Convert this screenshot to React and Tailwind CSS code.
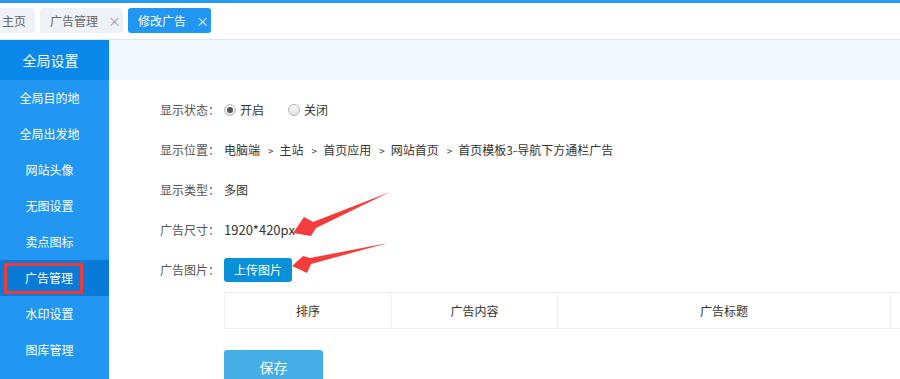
import React from "react";

const menu = ["全局目的地", "全局出发地", "网站头像", "无图设置", "卖点图标", "广告管理", "水印设置", "图库管理"];
const crumbs = ["主站", "首页应用", "网站首页", "首页模板3-导航下方通栏广告"];

function Row({ label, children }) {
  return (
    <div className="flex items-center h-[40px]">
      <div className="w-[64px] text-[#555]">{label}</div>
      <div className="flex items-center text-[#333]">{children}</div>
    </div>
  );
}

function Radio({ checked, label }) {
  return (
    <label className="flex items-center mr-[24px]">
      <span className="w-[12px] h-[12px] rounded-full border border-[#b5b5b5] bg-gradient-to-b from-[#fafafa] to-[#e2e2e2] flex items-center justify-center">
        {checked && <span className="w-[6px] h-[6px] rounded-full bg-[#555]" />}
      </span>
      <span className="ml-[4px]">{label}</span>
    </label>
  );
}

export default function App() {
  return (
    <div
      className="relative w-[900px] h-[379px] overflow-hidden bg-white text-[12px]"
      style={{ fontFamily: '"Noto Sans CJK SC", "Noto Sans", sans-serif' }}
    >
      <div className="h-[3px] bg-[#239bf3]" />
      {/* tabs */}
      <div className="h-[37px] border-b border-[#dfe6f0] flex items-start pt-[5px] -ml-[8px] gap-[5px]">
        <div className="h-[25px] flex items-center pl-[10px] pr-[9px] rounded-[3px] bg-[#eff1f8] text-[#666]">主页</div>
        <div className="h-[25px] w-[83px] flex items-center pl-[10px] rounded-[3px] bg-[#eff1f8] text-[#666]">
          广告管理<span className="ml-[10px] text-[#999] text-[13px]">×</span>
        </div>
        <div className="h-[25px] w-[83px] flex items-center pl-[10px] rounded-[3px] bg-[#2196f3] text-white">
          修改广告<span className="ml-[10px] text-[#e6f2ff] text-[13px]">×</span>
        </div>
      </div>

      <div className="flex">
        {/* sidebar */}
        <div className="w-[109px] h-[340px] bg-[#2196f3] text-white shrink-0">
          <div className="h-[40px] bg-[#0a88ea] flex items-center justify-center pr-[8px] text-[14px]">全局设置</div>
          {menu.map((m) =>
            m === "广告管理" ? (
              <div key={m} className="h-[36px] flex items-center bg-[#0a7ad8] pl-[4px]">
                <span className="w-[79px] h-[31px] border-[3px] border-[#f03a3a] flex items-center pl-[18px]">{m}</span>
              </div>
            ) : (
              <div key={m} className="h-[36px] flex items-center justify-center pr-[10px]">
                {m}
              </div>
            )
          )}
        </div>

        {/* main */}
        <div className="flex-1 min-w-0">
          <div className="h-[40px] bg-[#f0f7fe]" />
          <div className="pl-[51px] pt-[10px]">
            <Row label="显示状态：">
              <Radio checked label="开启" />
              <Radio label="关闭" />
            </Row>
            <Row label="显示位置：">
              <span>电脑端</span>
              {crumbs.map((c) => (
                <span key={c} className="flex items-center">
                  <span className="ml-[8px] mr-[6px] text-[10px]">&gt;</span>
                  <span>{c}</span>
                </span>
              ))}
            </Row>
            <Row label="显示类型：">多图</Row>
            <Row label="广告尺寸：">
              <span className="text-[13px]">1920*420px</span>
            </Row>
            <Row label="广告图片：">
              <button className="h-[24px] w-[68px] rounded-[3px] bg-[#0891d9] text-white text-[12px]">上传图片</button>
            </Row>
            <div className="ml-[64px] mt-[2px] w-[720px] h-[37px] border border-[#eee] flex text-[#333]">
              <div className="w-[167px] border-r border-[#eee] flex items-center justify-center">排序</div>
              <div className="w-[166px] border-r border-[#eee] flex items-center justify-center">广告内容</div>
              <div className="w-[333px] border-r border-[#eee] flex items-center justify-center">广告标题</div>
              <div className="flex-1" />
            </div>
            <button className="ml-[64px] mt-[21px] h-[34px] w-[99px] rounded-[3px] bg-[#45aee6] text-white text-[14px]">保存</button>
          </div>
        </div>
      </div>

      {/* annotation arrows */}
      <svg className="absolute left-0 top-0 pointer-events-none" width="900" height="379">
        <polygon points="293,233 304,217 313,222 390,192 316,228 311,236" fill="#f43c3c" />
        <polygon points="292,266 303,256 310,258 388,243 311,264 307,273" fill="#f43c3c" />
      </svg>
    </div>
  );
}
